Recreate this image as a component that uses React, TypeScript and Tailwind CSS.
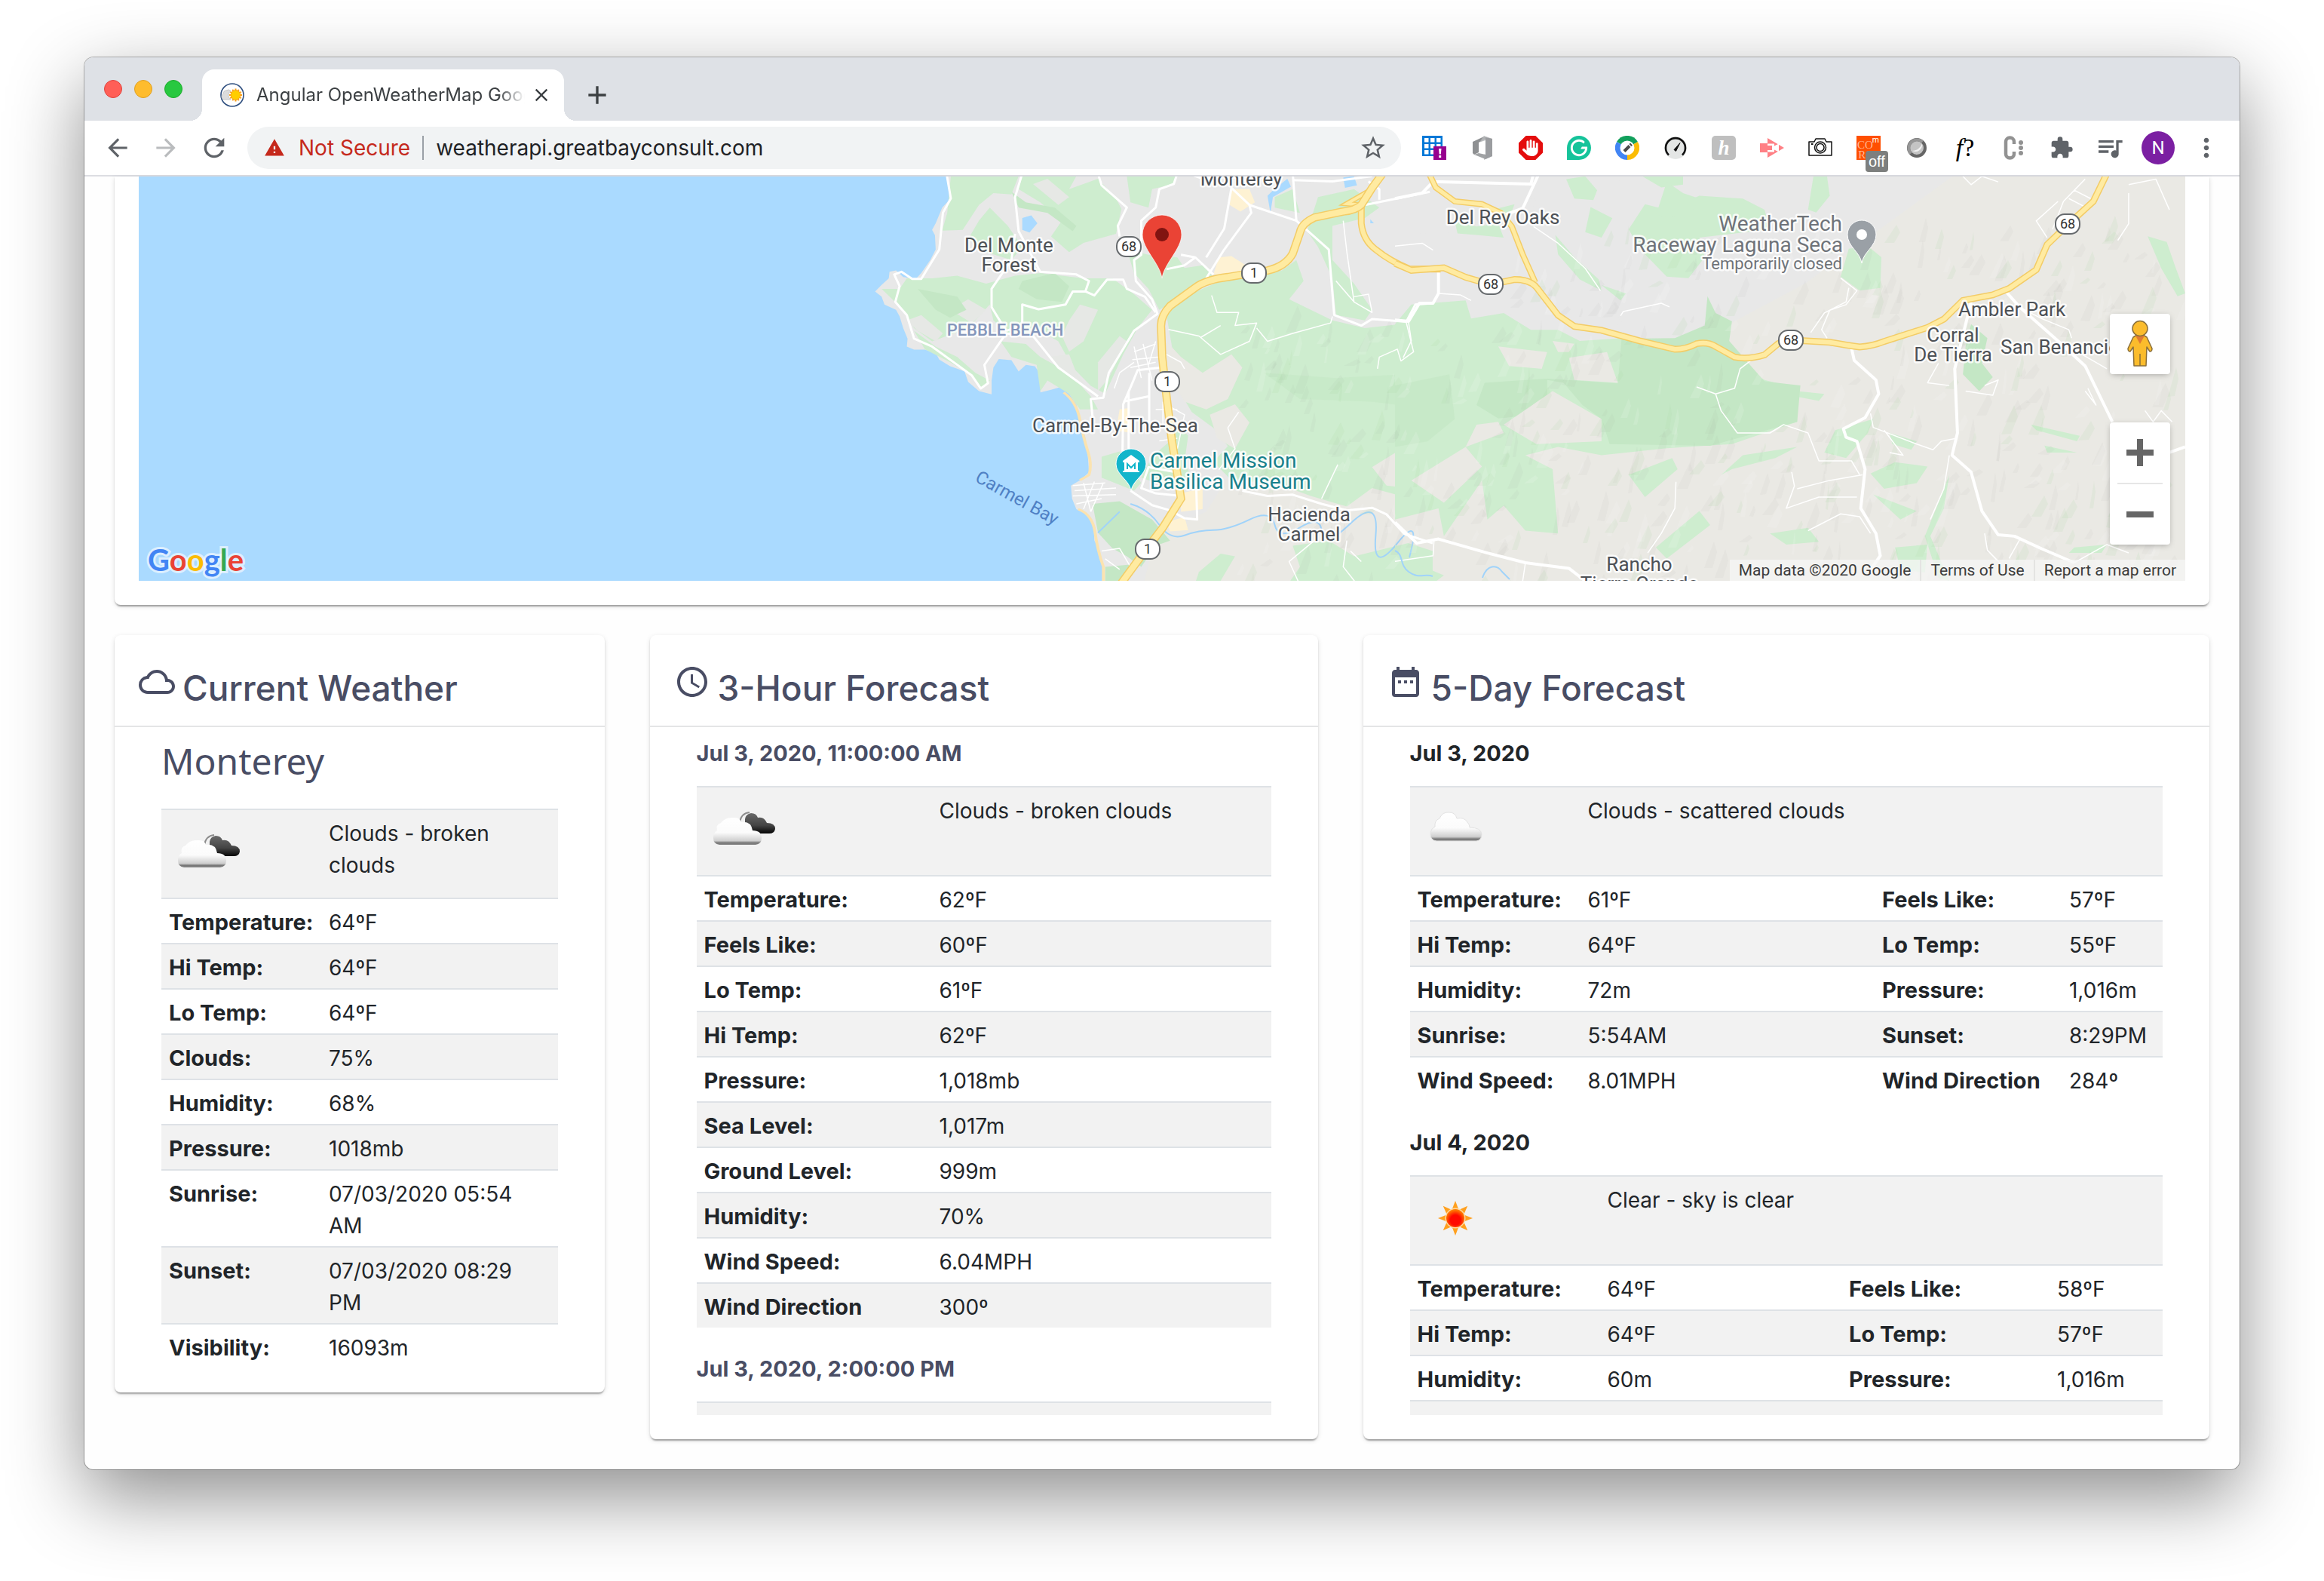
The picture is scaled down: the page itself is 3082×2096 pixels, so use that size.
import React from "react";
import {
  MdAccessTime,
  MdAdd,
  MdArrowBack,
  MdArrowForward,
  MdClose,
  MdCloudQueue,
  MdDateRange,
  MdExtension,
  MdMoreVert,
  MdQueueMusic,
  MdRefresh,
  MdStarBorder,
  MdWarning,
} from "react-icons/md";
import { FaHand } from "react-icons/fa6";
import { SiGrammarly } from "react-icons/si";

/* ------------------------------------------------------------------ */
/* Browser chrome                                                      */
/* ------------------------------------------------------------------ */

function Favicon() {
  return (
    <svg viewBox="0 0 32 32" className="size-8 shrink-0" aria-hidden="true">
      <circle cx="16" cy="16" r="15" fill="#fff" stroke="#2f4f7f" strokeWidth="1.6" />
      <g stroke="#f9a01b" strokeWidth="2">
        {[0, 30, 60, 90, 120, 150].map((a) => (
          <path key={a} d="M12 16H29" transform={`rotate(${a} 20.5 16)`} />
        ))}
      </g>
      <circle cx="20.5" cy="16" r="6.4" fill="#ffce00" stroke="#f9a01b" />
      <path
        d="M5 22a4 4 0 0 1-1-7.500a4 4 0 0 1 4-4.500a4.500 4.500 0 0 1 6 .5a7 7 0 0 0 0 11.500z"
        fill="#dcdcdc"
        stroke="#bdbdbd"
        strokeWidth=".8"
      />
    </svg>
  );
}

function TabStrip() {
  return (
    <div className="flex h-[84px] items-end bg-[#dee1e6] pl-[26px]">
      <div className="flex h-full items-center gap-4">
        <button aria-label="Close window" className="size-6 rounded-full border border-[#e0443e] bg-[#ff5f57]" />
        <button aria-label="Minimize window" className="size-6 rounded-full border border-[#dfa023] bg-[#febc2e]" />
        <button aria-label="Zoom window" className="size-6 rounded-full border border-[#1aab29] bg-[#28c840]" />
      </div>
      <div className="relative ml-[26px] flex h-[68px] w-[480px] items-center rounded-t-2xl bg-white pr-4 pl-6">
        <span className="absolute bottom-0 -left-4 size-4 bg-[radial-gradient(circle_at_0_0,transparent_16px,white_16px)]" />
        <span className="absolute -right-4 bottom-0 size-4 bg-[radial-gradient(circle_at_100%_0,transparent_16px,white_16px)]" />
        <Favicon />
        <span className="ml-4 min-w-0 flex-1 overflow-hidden text-[24px] leading-8 whitespace-nowrap text-[#3c4043] [mask-image:linear-gradient(to_right,black_90%,transparent_100%)]">
          Angular OpenWeatherMap Google
        </span>
        <button aria-label="Close tab" className="ml-2 text-[28px] text-[#3c4043]">
          <MdClose />
        </button>
      </div>
      <button aria-label="New tab" className="mb-3.5 ml-6 text-[40px] text-[#3c4043]">
        <MdAdd />
      </button>
    </div>
  );
}

function GridIcon() {
  return (
    <svg viewBox="0 0 32 32" className="size-8">
      <path fill="#0078d7" d="M0 0h27v27H0z" />
      {[3, 11, 19].map((y) =>
        [3, 11, 19].map((x) => <rect key={`${x}-${y}`} x={x} y={y} width="5.500" height="5.500" fill="#fff" />),
      )}
      <path fill="#97008e" d="M15 14h17v18H15z" />
      <path fill="#fff" d="M22 17h3.500l-.7 7.500h-2.100zM22.200 26h3v3h-3z" />
    </svg>
  );
}

function OfficeIcon() {
  return (
    <svg viewBox="0 0 32 32" className="size-8">
      <path fill="#8e9092" d="M3 8 18 1l4 2-11 6v13l-6 3-2-2z" />
      <path fill="#b6b8ba" d="m18 0 11 4v23l-11 5V8l-7 2 7-10z" opacity=".85" />
      <path fill="#fff" d="M11 9 20 6v19l-9-2z" />
      <path fill="#a1a3a5" d="m5 25 6-2 9 2v6z" />
      <path fill="#9b9da0" d="M20 2l9 2v23l-9 4z" />
    </svg>
  );
}

function AdblockIcon() {
  return (
    <span className="grid size-8 place-items-center bg-[#e40d0d] text-[22px] text-white [clip-path:polygon(30%_0,70%_0,100%_30%,100%_70%,70%_100%,30%_100%,0_70%,0_30%)]">
      <FaHand />
    </span>
  );
}

function ColorWheelIcon() {
  return (
    <svg viewBox="0 0 32 32" className="size-8">
      <path fill="#12a05c" d="M16 16 2.100 8a16 16 0 0 1 27.800 0z" />
      <path fill="#fbbc04" d="M16 16 29.900 8A16 16 0 0 1 16 32z" />
      <path fill="#4285f4" d="M16 16v16A16 16 0 0 1 2.100 8z" />
      <circle cx="16" cy="16" r="9.500" fill="#fff" />
      <path d="m12 20.500 7-7" stroke="#4a4a4a" strokeWidth="4" />
      <path d="m20 12.500 1.500-1.500" stroke="#4a4a4a" strokeWidth="4" />
    </svg>
  );
}

function GaugeIcon() {
  return (
    <svg viewBox="0 0 32 32" className="size-8" fill="none">
      <circle cx="16" cy="16" r="15" fill="#e4e6e5" />
      <path d="M7 25.500a13 13 0 1 1 18 0" stroke="#111" strokeWidth="2.600" />
      <path d="m14 18.500 8-9-5.500 11z" fill="#111" stroke="#111" />
    </svg>
  );
}

function HoneyIcon() {
  return (
    <span className="grid size-8 place-items-center rounded-[5px] bg-[#bfbfbf] font-['Liberation_Serif',serif] text-[27px] leading-8 font-bold text-white italic">
      h
    </span>
  );
}

function ScreencastIcon() {
  return (
    <svg viewBox="0 0 32 32" className="size-8">
      <path fill="#ff8085" d="M10 3 32 16 10 29v-7H0V10h10z" />
      <path fill="#fff" d="M10 10.500h9v3l6-3v11l-6-3v3h-9z" />
      <path fill="#ff8085" d="M10 13h6v6h-6z" />
    </svg>
  );
}

function CameraIcon() {
  return (
    <svg viewBox="0 0 34 32" className="h-8 w-[34px]" fill="none" stroke="#111" strokeWidth="1.500">
      <path d="M2 8h7l2-4h12l2 4h7v18H2z" strokeLinejoin="round" />
      <circle cx="17" cy="15.500" r="7.500" />
      <circle cx="17" cy="15.500" r="5" />
      <path d="M5 11h2.500" strokeWidth="2" />
    </svg>
  );
}

function CorsIcon() {
  return (
    <span className="relative block size-8 bg-[#ff4f00] font-['Liberation_Serif',serif] text-[15px] leading-[13px] text-[#ffb896]">
      <span className="absolute top-1.5 left-px">
        CO
        <br />
        RS
      </span>
      <span className="absolute top-px right-0.5 font-['Liberation_Sans',sans-serif] text-[11px] leading-[8px] text-white">m</span>
      <span className="absolute top-5 left-3 h-7 rounded bg-[#7d7f7e] px-1 font-['Liberation_Sans',sans-serif] text-[20px] leading-7 text-white">
        off
      </span>
    </span>
  );
}

function RingIcon() {
  return (
    <svg viewBox="0 0 32 32" className="size-8" fill="none">
      <circle cx="16" cy="16" r="11" fill="#c4c4c4" stroke="#666" strokeWidth="4" />
      <path d="M8 23.500a11 11 0 0 1 15.500-15.500" stroke="#979797" strokeWidth="4" />
      <path d="M10 20a9 9 0 0 0 13-9.500a14 14 0 0 1-13 9.500z" fill="#f0f0f0" />
    </svg>
  );
}

function DottedCIcon() {
  return (
    <svg viewBox="0 0 32 32" className="size-8" fill="none">
      <path d="M17 11V8a5.500 5.500 0 0 0-11 0v16a5.500 5.500 0 0 0 11 0v-3" stroke="#929292" strokeWidth="4.500" />
      <g fill="#929292">
        <circle cx="26" cy="9" r="3" />
        <circle cx="26" cy="16" r="3" />
        <circle cx="26" cy="23" r="3" />
      </g>
    </svg>
  );
}

const extensions: { label: string; icon: React.ReactNode }[] = [
  { label: "Spreadsheet", icon: <GridIcon /> },
  { label: "Office", icon: <OfficeIcon /> },
  { label: "Ad blocker", icon: <AdblockIcon /> },
  { label: "Grammar", icon: <SiGrammarly className="size-8 text-[#15c39a]" /> },
  { label: "Color picker", icon: <ColorWheelIcon /> },
  { label: "Speed", icon: <GaugeIcon /> },
  { label: "Coupons", icon: <HoneyIcon /> },
  { label: "Screencast", icon: <ScreencastIcon /> },
  { label: "Screenshot", icon: <CameraIcon /> },
  { label: "CORS", icon: <CorsIcon /> },
  { label: "Ring", icon: <RingIcon /> },
  {
    label: "Fonts",
    icon: (
      <span className="font-['Liberation_Serif',serif] text-[34px] leading-8 text-black">
        <i>f</i>
        <b className="font-medium">?</b>
      </span>
    ),
  },
  { label: "Console", icon: <DottedCIcon /> },
  { label: "Extensions", icon: <MdExtension className="size-8 text-[#5f6368]" /> },
  { label: "Media", icon: <MdQueueMusic className="size-10 text-[#5f6368]" /> },
  {
    label: "Profile",
    icon: (
      <span className="grid size-11 place-items-center rounded-full bg-[#7b1fa2] font-['Roboto',sans-serif] text-[24px] leading-none text-white">
        N
      </span>
    ),
  },
  { label: "Menu", icon: <MdMoreVert className="size-10 text-[#5f6368]" /> },
];

function Toolbar() {
  return (
    <div className="flex h-[74px] items-center border-b-2 border-[#dcdde2] bg-white pr-3 pl-3">
      <button aria-label="Back" className="grid w-16 place-items-center text-[38px] text-[#5f6368]">
        <MdArrowBack />
      </button>
      <button aria-label="Forward" className="grid w-16 place-items-center text-[38px] text-[#babcbe]">
        <MdArrowForward />
      </button>
      <button aria-label="Reload" className="grid w-16 place-items-center text-[40px] text-[#5f6368]">
        <MdRefresh />
      </button>
      <div className="ml-3 flex h-14 min-w-0 flex-1 items-center rounded-full bg-[#f1f3f4] pr-[18px] pl-[22px] text-[28px] leading-9">
        <MdWarning className="size-7 shrink-0 text-[#c5291c]" />
        <span className="ml-[18px] whitespace-nowrap text-[#c5291c]">Not Secure</span>
        <span className="mr-4 ml-4 h-8 w-0.5 bg-[#9aa0a6]" />
        <input
          aria-label="Address"
          className="min-w-0 flex-1 bg-transparent text-[#202124] outline-none"
          defaultValue="weatherapi.greatbayconsult.com"
        />
        <button aria-label="Bookmark" className="text-[38px] text-[#5f6368]">
          <MdStarBorder />
        </button>
      </div>
      <div className="ml-3 flex items-center">
        {extensions.map((e) => (
          <button key={e.label} aria-label={e.label} className="grid h-14 w-16 place-items-center">
            {e.icon}
          </button>
        ))}
      </div>
    </div>
  );
}

/* ------------------------------------------------------------------ */
/* Map                                                                 */
/* ------------------------------------------------------------------ */

const COAST =
  "M222 0 232 95 208 130 190 190 180 215 188 235 190 290 175 330 150 380 135 402 100 395 80 370 62 375 60 400 40 425 22 450 40 470 48 500 80 520 90 545 100 590 112 630 110 660 130 672 160 672 190 685 200 710 230 735 270 755 280 795 310 830 345 842 345 790 350 740 365 708 400 712 420 755 440 730 465 735 485 775 480 835 510 825 535 815 560 840 580 880 595 950 605 1010 612 1080 615 1140 590 1170 565 1190 568 1240 580 1280 610 1300 628 1340 630 1400 645 1440 655 1500 655 1600H3800V0Z";

/* Small hill-shading facets scattered over the inland part of the map. */
function facets(count: number) {
  let seed = 7;
  const rnd = () => {
    seed = (seed * 16807) % 2147483647;
    return seed / 2147483647;
  };
  const out: { d: string; fill: string; opacity: number }[] = [];
  for (let i = 0; i < count; i++) {
    const x = 1640 + rnd() * 1250;
    const low = x < 2000 ? 440 : 320;
    const y = low + rnd() * (790 - low);
    const w = 4 + rnd() * 14;
    const h = 8 + rnd() * 32;
    const t = rnd();
    out.push({
      d: `M${x.toFixed(0)} ${y.toFixed(0)}l${w.toFixed(0)} ${(-h).toFixed(0)} ${(w * 0.3).toFixed(0)} ${(h * 0.4).toFixed(0)} ${(-w * 0.5).toFixed(0)} ${(h * 0.6).toFixed(0)}z`,
      fill: t < 0.5 ? "#8a8a80" : t < 0.8 ? "#ffffff" : "#a8d8a0",
      opacity: t < 0.5 ? 0.05 : t < 0.8 ? 0.13 : 0.12,
    });
  }
  return out;
}

const hill = facets(620);

const shields: [number, number, string][] = [
  [1497, 327, "68"],
  [1663, 362, "1"],
  [1548, 506, "1"],
  [1522, 728, "1"],
  [1977, 377, "68"],
  [2375, 451, "68"],
  [2742, 297, "68"],
];

type Label = { x: number; y: number; text: string; anchor?: "start" | "middle" | "end"; fill?: string; size?: number };

const labels: Label[] = [
  { x: 1646, y: 246, text: "Monterey" },
  { x: 1338, y: 334, text: "Del Monte" },
  { x: 1338, y: 360, text: "Forest" },
  { x: 1479, y: 573, text: "Carmel-By-The-Sea" },
  { x: 1525, y: 620, text: "Carmel Mission", anchor: "start", fill: "#17808c", size: 28 },
  { x: 1525, y: 648, text: "Basilica Museum", anchor: "start", fill: "#17808c", size: 28 },
  { x: 1736, y: 691, text: "Hacienda" },
  { x: 1736, y: 717, text: "Carmel" },
  { x: 1993, y: 297, text: "Del Rey Oaks" },
  { x: 2443, y: 306, text: "WeatherTech", anchor: "end", fill: "#6f7379", size: 28 },
  { x: 2444, y: 334, text: "Raceway Laguna Seca", anchor: "end", fill: "#6f7379", size: 28 },
  { x: 2443, y: 357, text: "Temporarily closed", anchor: "end", fill: "#6f7379", size: 22 },
  { x: 2668, y: 419, text: "Ambler Park" },
  { x: 2590, y: 453, text: "Corral" },
  { x: 2590, y: 479, text: "De Tierra" },
  { x: 2653, y: 469, text: "San Benancio", anchor: "start" },
  { x: 2174, y: 757, text: "Rancho" },
  { x: 2174, y: 783, text: "Tierra Grande" },
];

const HWY1 =
  "M1440-20 1400 55 1370 120Q1355 140 1320 145L1240 168Q1205 190 1200 225L1180 305Q1160 355 1110 370L1000 395Q940 405 910 435L840 505Q812 545 815 590L818 700 830 850 845 1020 858 1130 870 1240 820 1350 770 1440 690 1590";
const HWY68_SPUR = "M1370 120V190Q1375 255 1410 290Q1450 335 1505 365L1590 365";
const HWY68_EAST =
  "M0 322 30 347 90 338 130 372 176 398 220 380Q250 380 262 412L300 508 330 548 380 562 450 600 515 630Q535 630 555 610Q575 602 590 620L625 658Q650 668 680 650L705 610Q715 596 740 598L800 605Q830 615 855 622Q880 618 900 602L980 552 1010 522 1045 455 1100 435 1130 412 1180 345 1200 255 1240 180 1285 100 1315-20";
const HWY218 = "M60-10 75 50 110 100 160 110 195 142 215 190 235 290 258 390";

function Highway({ d, w = 8 }: { d: string; w?: number }) {
  return (
    <g fill="none">
      <path d={d} stroke="#f3cc66" strokeWidth={w + 3} vectorEffect="non-scaling-stroke" />
      <path d={d} stroke="#ffeba1" strokeWidth={w} vectorEffect="non-scaling-stroke" />
    </g>
  );
}

function WestLand() {
  return (
    <g transform="translate(1150 230) scale(.4783 .3476)">
      <path d={COAST} fill="#e8e8e8" />
      <path d="M1240 1100 1568 1220H3800V0H3020L2600 420 1568 1180 1000 1160 940 1290 800 1380 760 1600H3800V1100Z" fill="#eae9e4" />
      <g fill="#ceedcf">
        <path d="M232 10H420L400 80 350 75 310 120 265 215 208 218 222 150Z" />
        <path d="M430 10H580L560 60 640 20 690 95 705 135 690 230 600 265 560 300 510 240 540 180 480 110 420 60Z" />
        <path d="M310 180 340 130 390 200 430 280 400 330 330 300 280 250Z" />
        <path d="M720 10H860L850 40 790 60 780 130 730 110Z" />
        <path d="M40 440 90 440 110 400 180 400 250 390 330 420 410 390 480 380 600 400 680 400 740 460 790 520 750 590 710 690 660 840 620 810 570 740 530 640 480 600 400 620 350 560 340 500 280 590 180 640 130 590 100 520Z" />
        <path d="M130 600 190 660 250 700 300 760 340 790 320 820 280 760 230 720 160 670Z" />
        <path d="M370 640 440 650 480 700 560 760 620 850 640 900 590 900 560 840 500 790 480 830 470 730 400 700Z" />
        <path d="M720 290 780 310 860 320 880 360 930 350 960 395 880 460 810 520 780 440 740 380Z" />
        <path d="M980 410 1150 370 1190 330 1210 410 1170 480 1290 560 1380 590 1568 560V1240L1480 1230 1400 1200 1330 1270 1230 1230 1130 1180 1010 1170 960 1100 1000 1040 960 970 900 910 870 840 850 700 840 620 830 540 880 470Z" />
        <path d="M1250 90 1350 60 1420 130 1380 170 1290 200 1290 330 1350 420 1400 520 1380 560 1300 540 1290 400 1250 280 1220 220Z" />
        <path d="M860 960 890 1000 880 1100 900 1160 860 1200 800 1180 760 1160 790 1080 840 1020Z" />
        <path d="M650 1080 700 1060 760 1180 740 1210 650 1160Z" />
        <path d="M1130 90 1180 60 1200 150 1130 130Z" />
        <path d="M1180 1420 1280 1400 1350 1460 1500 1410 1568 1440V1600H1150L1200 1500Z" />
        <path d="M920 1520 980 1450 1020 1460 960 1600H900Z" />
      </g>
      <g fill="#e6e8e5">
        <path d="M560 560 590 500 640 520 600 640 560 680 540 620Z" />
        <path d="M110 560 150 540 210 610 190 640 140 600Z" />
        <path d="M640 720 700 620 720 640 670 780 640 830Z" />
        <path d="M230 520 280 480 330 520 290 570Z" />
        <path d="M500 700 560 690 580 760 600 800 550 760Z" />
        <path d="M460 40 500 20 560 90 530 120Z" />
      </g>
      <g fill="#eae9e4">
        <path d="M830 640 870 700 930 760 1010 690 1040 740 1000 860 940 900 880 870 830 760Z" />
        <path d="M950 920 1020 880 1060 950 1020 1050 970 1010Z" />
        <path d="M1400 1120 1470 1060 1568 1010V1150L1500 1200 1440 1190Z" />
      </g>
      <g fill="#c4e7c5">
        <path d="M140 440 250 470 275 520 230 550 190 520Z" />
        <path d="M430 410 520 380 560 430 540 490 470 480 420 440Z" />
        <path d="M400 70 440 110 520 130 580 200 570 220 500 150 420 130Z" />
        <path d="M625 1260 700 1250 790 1320 840 1400 800 1420 760 1500 720 1460 680 1430 640 1370Z" />
        <path d="M660 1500 740 1490 700 1570H660Z" />
        <path d="M1100 760 1300 780 1568 760V900L1400 870 1200 860Z" opacity=".6" />
      </g>
      <g fill="#fef2d3">
        <path d="M1010 60 1060 60 1075 110 1035 145 1005 120Z" />
        <path d="M975 320 1010 315 1050 350 1050 385 960 385Z" />
        <path d="M870 1220 930 1200 930 1280 870 1290ZM830 1330 880 1310 890 1360 840 1365Z" />
        <path d="M700 900 725 895 735 990 690 980Z" />
      </g>
      <path
        d="M545 835Q580 870 590 940T612 1060 615 1150L590 1170M585 1280Q625 1300 632 1370T655 1500V1580"
        fill="none"
        stroke="#fbe3b0"
        strokeWidth="8"
      />
      <g fill="#aadaff">
        <path d="M430 170 455 160 472 190 450 225 430 215Z" />
        <path d="M1320 15 1350 10 1358 45 1325 55Z" />
        <path d="M1110 85 1125 65 1165 20 1175 50 1125 90 1118 150Z" />
        <path d="M1395 175 1405 190 1395 190Z" />
      </g>
      <path
        d="M730 1260Q780 1280 810 1340T880 1380 960 1360 1060 1320 1130 1340 1200 1350 1260 1370 1340 1335 1410 1380 1470 1410 1500 1480 1568 1550M640 1370 700 1290"
        fill="none"
        stroke="#a0d3fa"
        strokeWidth="2"
        vectorEffect="non-scaling-stroke"
      />
    </g>
  );
}

function EastLand() {
  return (
    <g transform="translate(1850 230) scale(.7207 .3699)">
      <path d="M0 0H340L290 80 250 100 280 220 390 460 420 540 330 550 260 400 230 450 200 550 130 500 60 460 0 500Z" fill="#e8e8e8" />
      <path d="M0 0H420L400 70 250 90 220 200 0 220Z" fill="#e8e8e8" />
      <g fill="#ceedcf">
        <path d="M0 540 30 470 130 455 140 520 200 500 250 560 300 560 340 600 420 590 520 640 600 650 680 740 740 770 740 890 620 970 500 985 380 1010 300 980 240 1010 290 1060 300 1290 240 1280 200 1190 170 1240 160 1100 90 1300 80 1200 0 1240Z" />
        <path d="M315 20 350 10 372 60 365 95 330 90Z" />
        <path d="M360 120 400 160 380 230 350 210Z" />
        <path d="M460 110 500 130 560 80 640 90 680 130 690 200 560 230 570 300 540 375 500 370 450 270 430 200Z" />
        <path d="M295 220 330 300 375 380 380 420 340 380 300 290Z" />
        <path d="M380 400 425 430 415 455Z" />
        <path d="M455 10H530V40L490 50Z" />
        <path d="M770 10 795 10 800 80 775 140 760 130Z" />
        <path d="M835 270 870 260 895 300 893 410 855 420 820 370Z" />
        <path d="M500 30 530 70 560 90 540 160 480 150Z" />
        <path d="M1170 900 1260 940 1255 960 1180 920ZM1195 975 1255 1000 1200 1000Z" />
        <path d="M1385 225 1420 245 1435 330 1454 430 1440 440 1410 340Z" />
        <path d="M790 1000 810 920 880 880 870 930 830 1020Z" />
        <path d="M875 1075 920 1035 980 1050 960 1110 900 1130Z" />
        <path d="M880 1150 960 1210 930 1240Z" />
        <path d="M1020 1080 1010 1200 985 1300 1020 1460 1000 1450 975 1300 1000 1180Z" />
        <path d="M600 1080 640 1010 740 980 700 1020 620 1060Z" />
        <path d="M430 1080 510 1020 520 1060 460 1160Z" />
        <path d="M690 1290 760 1270 780 1320 720 1330ZM920 1340 980 1330 975 1430 930 1420Z" />
        <path d="M560 1210 580 1260 500 1380 480 1340Z" />
        <path d="M1250 1340 1310 1330 1300 1360 1240 1360ZM910 930 960 960 950 990 915 970Z" />
        <path d="M740 780 790 790 780 815 740 800ZM0 1330 40 1400 90 1440 70 1470H0Z" />
        <path d="M110 170 150 190 190 180 200 230 150 220 115 215ZM180 130 220 110 210 160Z" />
      </g>
      <g fill="#c4e7c5">
        <path d="M417 592 515 590 570 545 575 440 590 500 620 530 615 600 655 690 680 745 746 760 740 890 580 976 395 970 380 880 345 830 310 750 280 740 280 860 190 878 150 830 165 750 280 735 410 752Z" />
        <path d="M0 760 100 720 110 880 60 960 0 980Z" opacity=".7" />
        <path d="M1060 540 1090 590 1080 680 1100 730 1075 780 1045 720 1050 620Z" />
      </g>
      <g fill="#eae9e4">
        <path d="M190 620 280 640 270 700 210 690Z" />
        <path d="M320 660 390 640 410 750 330 740Z" />
        <path d="M290 600 330 610 320 640 300 640Z" />
        <path d="M200 900 290 780 380 880 380 960 260 970Z" />
        <path d="M30 1100 130 980 160 1050 90 1180Z" />
        <path d="M150 900 190 890 200 930 130 980Z" />
      </g>
    </g>
  );
}

function WhiteRoads() {
  return (
    <g fill="none" stroke="#fff" strokeLinejoin="round">
      <g transform="translate(1150 230) scale(.4783 .3476)" strokeWidth="3">
        {[
          "M220 0 232 95 210 150 200 290 150 402 125 402 95 375 75 385 90 430 78 490 110 540 130 630 180 660 290 770 315 820 335 800 325 730 385 610 460 620 530 740 640 850",
          "M430 0 410 90 420 220 480 375 580 385 615 410 605 450 630 465 665 405 710 405 720 440 770 470 800 530",
          "M410 230 400 330 345 440 345 510 385 600",
          "M385 600 430 580 430 500 475 518 550 500 570 450 605 450",
          "M640 0 650 45 720 130 695 200 700 240",
          "M860 0 850 40 810 60 800 130 760 180 760 310 740 330 745 410 790 480 805 535 740 600 670 760 655 855 620 860 625 930",
          "M1060 120 1010 55 990 210 940 320",
          "M1180 0 1190 180 1060 120 1065 150 990 290 940 400",
          "M1190 180 1280 290 1295 540 1370 580 1400 555 1495 565 1520 500 1568 495",
          "M1380 120 1560 70M890 0 930 20M1000 10 1060 30M1180 25 1290 30 1400 10M1390 30 1420 60 1420 100",
          "M830 365 880 350 910 320 960 385M870 310 910 320",
          "M815 740 750 750 735 800 710 880 708 1060M782 760V960M725 830V1060M710 870 780 850",
          "M730 1210 790 1265 840 1285 880 1315 915 1320 912 1170",
          "M860 1140 780 1120 760 1200 800 1220 870 1230",
          "M1040 1210 1110 1230 1180 1225 1260 1260 1330 1285 1400 1275 1440 1300 1490 1375 1568 1410",
        ].map((d) => (
          <path key={d} d={d} vectorEffect="non-scaling-stroke" />
        ))}
      </g>
      <g transform="translate(1150 230) scale(.4783 .3476)" strokeWidth="1.500">
        {[
          "M835 595 920 620 980 690 1060 640 1080 570 1020 580 1030 530 970 530 955 465M925 625 980 580M1080 590 1110 640 1180 610 1285 570 1290 545",
          "M1495 570 1515 680 1480 715 1470 670 1420 700 1415 745",
          "M1030 910 1000 970 1020 1050 975 1130M1305 1110 1260 1240M1240 1400 1170 1480 1210 1600M1330 1400 1320 1500 1360 1570",
          "M740 680 800 650M735 710 810 700M730 740 800 720M740 660 760 780M765 650 790 790M800 640 780 730M685 820 700 760 740 720M830 690 870 720 880 745",
          "M570 1190 660 1180M575 1210 690 1200M570 1230 690 1225M580 1260 650 1240M600 1180 620 1290M630 1175 600 1280M655 1180 620 1290",
          "M650 1440 700 1430 730 1500M660 1470 700 1510M820 870 820 960M840 890 880 920 860 1050M800 900H860M790 960H870M810 1020 860 1010",
          "M1320 180 1330 300 1350 490 1400 530 1390 460 1350 470M1300 410 1350 490M1370 1480 1340 1440",
        ].map((d) => (
          <path key={d} d={d} vectorEffect="non-scaling-stroke" />
        ))}
      </g>
      <g transform="translate(1850 230) scale(.7207 .3699)" strokeWidth="4">
        {[
          "M0 90 50 70 70 30 80 30 250 38 255 0M265 0 235 125 200 150",
          "M80 340 80 430 70 465 45 465 25 530 0 525",
          "M0 1250 40 1325 80 1310 170 1360 240 1395 320 1415 350 1460",
          "M840 625 845 670 885 740 890 790 865 875 825 915 830 945 850 960 865 1060 857 1200 885 1290 893 1370 875 1420",
          "M1060 460 1030 700 1035 930 1025 1010 1060 1070 1080 1210 1110 1295 1140 1300 1190 1345 1250 1395",
          "M1125 425 1150 480 1220 600 1270 690 1320 890",
          "M1425 1000 1454 980",
        ].map((d) => (
          <path key={d} d={d} vectorEffect="non-scaling-stroke" />
        ))}
      </g>
      <g transform="translate(1850 230) scale(.7207 .3699)" strokeWidth="1.500">
        {[
          "M255 190 300 250 350 340 378 420M415 510 420 495 490 465 505 478M80 430 120 435 140 455M25 535 30 600 15 660",
          "M655 670 635 700 625 770 590 790 555 765M590 790 600 850 630 930 690 930 715 900 760 930 780 1030 840 1030 855 1080",
          "M820 375 850 420 830 470 800 490 785 560 795 590M835 410 830 460 790 500 765 570",
          "M1030 950 1005 960 990 990 960 970 880 910 875 860M900 920 935 1010 910 1000",
          "M1210 200 1230 100 1270 20M1200 230 1180 170 1220 100M1240 90 1270 120M1250 60 1280 90M1330 240 1350 180 1350 70M1350 40 1400 20 1425 130",
          "M1150 480 1190 520 1240 560 1245 590M1230 610 1310 700M1270 780 1290 830 1275 770",
          "M1000 680 980 750 1020 760M1050 780 1100 795 1110 740 1085 760M1045 10 1060 40 1080 10 1110 30",
          "M730 1070 735 1120 720 1200 780 1160 850 1160M740 1130 800 1100 860 1080M760 1280 820 1220 855 1230 875 1290M517 1105 515 1200 490 1290 465 1360",
          "M1020 1010 1010 1130 985 1240M1085 1290 1090 1350 1115 1400M1150 1310 1130 1380M1380 850 1395 890 1410 850 1430 890",
          "M0 1390 70 1370 72 1310M240 1395 235 1460M1250 1395 1310 1330 1350 1360M0 260 50 250 70 275",
        ].map((d) => (
          <path key={d} d={d} vectorEffect="non-scaling-stroke" />
        ))}
      </g>
      <path
        d="M1850 730C1862 735 1855 748 1868 758S1890 760 1900 764M1966 766C1972 748 1985 748 1992 758L2002 768"
        stroke="#a0d3fa"
        strokeWidth="2"
      />
    </g>
  );
}

function GoogleLogo() {
  const letters: [string, string][] = [
    ["G", "#4285f4"],
    ["o", "#ea4335"],
    ["o", "#fbbc04"],
    ["g", "#4285f4"],
    ["l", "#34a853"],
    ["e", "#ea4335"],
  ];
  return (
    <a
      href="#google"
      aria-label="Google"
      className="absolute bottom-1 left-3 font-['Lato',sans-serif] text-[40px] leading-[48px] font-bold [paint-order:stroke] [-webkit-text-stroke:6px_rgba(255,255,255,.6)]"
    >
      {letters.map(([ch, fill], i) => (
        <span key={i} style={{ color: fill }}>
          {ch}
        </span>
      ))}
    </a>
  );
}

function Pegman() {
  return (
    <svg viewBox="0 0 40 64" className="h-16 w-10" aria-hidden="true">
      <path
        d="M11 23Q5 36 4 38Q4 42 7 42L11 36 12 61H28L29 36 33 42Q36 42 36 38Q35 36 29 23L24 20H16Z"
        fill="#fbbc2c"
        stroke="#8a6f3a"
        strokeWidth="1.500"
        strokeLinejoin="round"
      />
      <path d="M14 21H26L20 32Z" fill="#e07b33" />
      <path d="M20 45V61" stroke="#8a6f3a" strokeWidth="1.500" />
      <circle cx="20" cy="11.500" r="10" fill="#fbbc2c" stroke="#8a6f3a" strokeWidth="1.500" />
    </svg>
  );
}

function MapPanel() {
  return (
    <div className="relative h-[536px] overflow-hidden bg-[#aadaff] font-['Roboto',sans-serif]">
      <svg viewBox="184 234 2714 536" preserveAspectRatio="xMidYMid slice" className="size-full" role="img" aria-label="Map of Monterey">
        <defs>
          <clipPath id="coast">
            <path d={COAST} transform="translate(1150 230) scale(.4783 .3476)" />
          </clipPath>
        </defs>
        <WestLand />
        <EastLand />
        <g clipPath="url(#coast)">
          {hill.map((f, i) => (
            <path key={i} d={f.d} fill={f.fill} opacity={f.opacity} />
          ))}
        </g>
        <WhiteRoads />
        <g transform="translate(1150 230) scale(.4783 .3476)">
          <Highway d={HWY68_SPUR} w={6} />
          <Highway d="M1370 120 1330 115 1400 60" w={4} />
          <Highway d={HWY1} />
        </g>
        <g transform="translate(1850 230) scale(.7207 .3699)">
          <Highway d={HWY218} w={5} />
          <Highway d={HWY68_EAST} w={6} />
        </g>

        <g fontSize="18" textAnchor="middle" fill="#333">
          {shields.map(([x, y, n]) => (
            <g key={`${x}-${y}`}>
              <rect x={x - 16} y={y - 13} width="32" height="26" rx="12" fill="#fff" stroke="#666a6d" strokeWidth="2" />
              <text x={x} y={y + 6}>
                {n}
              </text>
            </g>
          ))}
        </g>

        <g stroke="#fff" strokeWidth="5" strokeLinejoin="round" paintOrder="stroke">
          {labels.map((l) => (
            <text
              key={l.text + l.y}
              x={l.x}
              y={l.y}
              textAnchor={l.anchor ?? "middle"}
              fill={l.fill ?? "#4d5156"}
              fontSize={l.size ?? 26}
              strokeOpacity=".85"
            >
              {l.text}
            </text>
          ))}
          <text x="1333" y="445" textAnchor="middle" fill="#8496bb" fontSize="22" fontWeight="500" strokeOpacity=".85">
            PEBBLE BEACH
          </text>
        </g>
        <text transform="translate(1345 667) rotate(29)" textAnchor="middle" fill="#4f80c4" fontSize="24">
          Carmel Bay
        </text>

        <path
          d="M1541 369C1538 349 1515 330 1515 311A26 26 0 0 1 1567 311C1567 330 1544 349 1541 369Z"
          fill="#ea4335"
          stroke="#fff"
          strokeOpacity=".7"
        />
        <circle cx="1541" cy="311" r="9" fill="#811411" />
        <path d="M1500 651C1498 636 1480 630 1480 615A20 20 0 0 1 1520 615C1520 630 1502 636 1500 651Z" fill="#12b5cb" stroke="#fff" />
        <path d="M1489 611 1500 603 1511 611V613H1489ZM1489 624H1511V626H1489Z" fill="#fff" />
        <path d="M1491 612H1509V625H1491Z" fill="#fff" />
        <path d="M1495 622V615L1500 620 1505 615V622" fill="none" stroke="#12b5cb" strokeWidth="2" />
        <path d="M2469 349C2467 334 2450 327 2450 311A19 19 0 0 1 2488 311C2488 327 2471 334 2469 349Z" fill="#9aa0a6" stroke="#fff" />
        <circle cx="2469" cy="311" r="7" fill="#fff" />
      </svg>

      <GoogleLogo />

      <div className="absolute right-5 bottom-12 flex w-20 flex-col gap-16">
        <button aria-label="Street View" className="grid size-20 place-items-center rounded bg-white shadow-[0_2px_8px_-2px_rgba(0,0,0,.35)]">
          <Pegman />
        </button>
        <div className="flex flex-col items-center rounded bg-white shadow-[0_2px_8px_-2px_rgba(0,0,0,.35)]">
          <button aria-label="Zoom in" className="grid size-20 place-items-center">
            <svg viewBox="0 0 36 36" className="size-9">
              <path d="M0 14H14V0H22V14H36V22H22V36H14V22H0Z" fill="#666" />
            </svg>
          </button>
          <span className="h-0.5 w-[60px] bg-[#e6e6e6]" />
          <button aria-label="Zoom out" className="grid size-20 place-items-center">
            <svg viewBox="0 0 36 36" className="size-9">
              <path d="M0 14H36V22H0Z" fill="#666" />
            </svg>
          </button>
        </div>
      </div>

      <div className="absolute right-0 bottom-0 flex h-7 divide-x-2 divide-[#e4e4e2] bg-[#f5f5f5]/75 text-[21px] leading-7 text-[#3c3c3c]">
        <span className="px-3">Map data ©2020 Google</span>
        <a href="#terms" className="px-3">
          Terms of Use
        </a>
        <a href="#report" className="px-3">
          Report a map error
        </a>
      </div>
    </div>
  );
}

/* ------------------------------------------------------------------ */
/* Weather icons                                                       */
/* ------------------------------------------------------------------ */

function CloudGradients() {
  return (
    <svg className="absolute size-0" aria-hidden="true">
      <defs>
        <linearGradient id="cloudLight" x1="0" y1="0" x2="0" y2="1">
          <stop offset="0" stopColor="#ffffff" />
          <stop offset=".55" stopColor="#fbfbfb" />
          <stop offset=".85" stopColor="#cfcfcf" />
          <stop offset=".93" stopColor="#777" />
          <stop offset="1" stopColor="#8a8a8a" />
        </linearGradient>
        <linearGradient id="cloudDark" x1="0" y1="0" x2="0" y2="1">
          <stop offset="0" stopColor="#6a6a6a" />
          <stop offset=".6" stopColor="#444" />
          <stop offset="1" stopColor="#050505" />
        </linearGradient>
        <radialGradient id="sunCore" cx=".5" cy=".6" r=".55">
          <stop offset=".5" stopColor="#ff0800" />
          <stop offset="1" stopColor="#ff7a00" />
        </radialGradient>
      </defs>
    </svg>
  );
}

function BrokenClouds() {
  return (
    <svg viewBox="0 0 100 100" className="size-[100px]" role="img" aria-label="Broken clouds">
      <path d="M49 38Q51 26 62 25" fill="none" stroke="#8c8c8c" strokeWidth="2" />
      <path d="M56 34Q57 27 64 26Q71 26 73 32Q81 30 85 39Q96 39 96 47Q95 53 88 53H70Q62 50 56 40Z" fill="url(#cloudDark)" />
      <path
        d="M22 68Q14 67 14 59Q14 52 19 49Q17 41 24 39Q30 31 41 32Q49 31 51 38Q64 36 66 49Q78 49 78 59Q78 67 70 68Z"
        fill="url(#cloudLight)"
      />
    </svg>
  );
}

function ScatteredClouds() {
  return (
    <svg viewBox="0 0 100 100" className="size-[100px]" role="img" aria-label="Scattered clouds">
      <path
        d="M27 63Q19 62 19 54Q19 47 25 44Q24 36 31 33Q35 24 44 25Q52 25 54 33Q64 31 68 38Q71 41 71 45Q86 45 87 54Q87 62 80 63Z"
        fill="url(#cloudLight)"
        stroke="#e2e2e2"
      />
    </svg>
  );
}

function ClearSun() {
  return (
    <svg viewBox="0 0 100 100" className="size-[100px]" role="img" aria-label="Clear sky">
      {[0, 45, 90, 135, 180, 225, 270, 315].map((a) => (
        <path key={a} d="M47 37 52 24 57 37Z" fill="#ffa01f" transform={`rotate(${a} 52 47)`} />
      ))}
      <circle cx="52" cy="47" r="13.500" fill="#ffd9a0" />
      <circle cx="52" cy="47" r="12" fill="url(#sunCore)" />
    </svg>
  );
}

/* ------------------------------------------------------------------ */
/* Weather cards                                                       */
/* ------------------------------------------------------------------ */

const CARD =
  "rounded-lg bg-white shadow-[0_4px_2px_-2px_rgba(0,0,0,.2),0_2px_2px_rgba(0,0,0,.14),0_2px_6px_rgba(0,0,0,.12)]";

function Card({ title, icon, span, children }: { title: string; icon: React.ReactNode; span: string; children: React.ReactNode }) {
  return (
    <section className={`${CARD} ${span} pb-8`}>
      <header className="flex h-[122px] items-center gap-2.5 border-b-2 border-[#e4e5e6] px-8 pt-5 text-[#494d64]">
        <span className="mb-4 text-[48px]">{icon}</span>
        <h2 className="text-[46px] leading-[58px] font-medium">{title}</h2>
      </header>
      {children}
    </section>
  );
}

type Row = React.ReactNode[];

function WeatherTable({ cols, icon, summary, rows, label }: { cols: string[]; icon: React.ReactNode; summary?: string; rows: Row[]; label: string }) {
  const cell = "border-t-2 border-[#dee2e6] text-left align-top";
  return (
    <table aria-label={label} className="w-full table-fixed border-separate border-spacing-0 text-[28px] leading-[42px] text-[#212529]">
      <colgroup>
        {cols.map((c, i) => (
          <col key={i} className={c} />
        ))}
      </colgroup>
      <tbody>
        <tr className="bg-[#f2f2f2]">
          <td className={`${cell} p-2`}>{icon}</td>
          <td className={`${cell} px-2.5 pt-2.5 pb-1.5`} colSpan={cols.length - 1}>
            {summary}
          </td>
        </tr>
        {rows.map((row, r) => (
          <tr key={r} className={r % 2 ? "bg-[#f2f2f2]" : ""}>
            {row.map((value, c) =>
              c % 2 === 0 ? (
                <th key={c} scope="row" className={`${cell} px-2.5 pt-2.5 pb-1.5 text-[29px] font-bold whitespace-nowrap`}>
                  {value}
                </th>
              ) : (
                <td key={c} className={`${cell} px-2.5 pt-2.5 pb-1.5`}>
                  {value}
                </td>
              ),
            )}
          </tr>
        ))}
      </tbody>
    </table>
  );
}

const currentRows: Row[] = [
  ["Temperature:", "64ºF"],
  ["Hi Temp:", "64ºF"],
  ["Lo Temp:", "64ºF"],
  ["Clouds:", "75%"],
  ["Humidity:", "68%"],
  ["Pressure:", "1018mb"],
  ["Sunrise:", "07/03/2020 05:54 AM"],
  ["Sunset:", "07/03/2020 08:29 PM"],
  ["Visibility:", "16093m"],
].map(([name, value]) => [
  name,
  <span key={name} className="block max-w-[280px]">
    {value}
  </span>,
]);

const hourlyRows: Row[] = [
  ["Temperature:", "62ºF"],
  ["Feels Like:", "60ºF"],
  ["Lo Temp:", "61ºF"],
  ["Hi Temp:", "62ºF"],
  ["Pressure:", "1,018mb"],
  ["Sea Level:", "1,017m"],
  ["Ground Level:", "999m"],
  ["Humidity:", "70%"],
  ["Wind Speed:", "6.04MPH"],
  ["Wind Direction", "300º"],
];

const day1Rows: Row[] = [
  ["Temperature:", "61ºF", "Feels Like:", "57ºF"],
  ["Hi Temp:", "64ºF", "Lo Temp:", "55ºF"],
  ["Humidity:", "72m", "Pressure:", "1,016m"],
  ["Sunrise:", "5:54AM", "Sunset:", "8:29PM"],
  ["Wind Speed:", "8.01MPH", "Wind Direction", "284º"],
];

const day2Rows: Row[] = [
  ["Temperature:", "64ºF", "Feels Like:", "58ºF"],
  ["Hi Temp:", "64ºF", "Lo Temp:", "57ºF"],
  ["Humidity:", "60m", "Pressure:", "1,016m"],
  ["\u00a0", "", "", ""],
];

function DateHeading({ children, className }: { children: React.ReactNode; className: string }) {
  return <h3 className={`mb-[22px] text-[29px] leading-[42px] font-bold ${className}`}>{children}</h3>;
}

export default function App() {
  return (
    <div className="bg-white px-28 pt-[76px] pb-[148px] font-['Inter',sans-serif]">
      <CloudGradients />
      <div className="overflow-hidden rounded-[12px] bg-[#fefefe] shadow-[0_0_0_1px_rgba(0,0,0,.28),0_36px_100px_rgba(0,0,0,.45)]">
        <TabStrip />
        <Toolbar />
        <main className="px-10 pb-10">
          <section className="rounded-b-lg bg-white px-8 pb-8 shadow-[0_4px_2px_-2px_rgba(0,0,0,.2),0_2px_2px_rgba(0,0,0,.14),0_2px_6px_rgba(0,0,0,.12)]">
            <MapPanel />
          </section>
          <div className="mt-10 grid grid-cols-12 items-start gap-x-[60px]">
            <Card title="Current Weather" icon={<MdCloudQueue />} span="col-span-3">
              <div className="px-[62px] pt-3.5">
                <h3 className="mb-8 font-['Noto_Sans',sans-serif] text-[48px] leading-[62px] text-[#494d64]">Monterey</h3>
                <WeatherTable
                  label="Current weather"
                  cols={["w-[212px]", ""]}
                  icon={<BrokenClouds />}
                  summary="Clouds - broken clouds"
                  rows={currentRows}
                />
              </div>
            </Card>

            <Card title="3-Hour Forecast" icon={<MdAccessTime />} span="col-span-4">
              <div className="h-[912px] overflow-hidden px-[62px] pt-3.5">
                <DateHeading className="text-[#494d64]">Jul 3, 2020, 11:00:00 AM</DateHeading>
                <WeatherTable
                  label="Jul 3, 2020, 11:00:00 AM"
                  cols={["w-[312px]", ""]}
                  icon={<BrokenClouds />}
                  summary="Clouds - broken clouds"
                  rows={hourlyRows}
                />
                <DateHeading className="mt-[34px] text-[#494d64]">Jul 3, 2020, 2:00:00 PM</DateHeading>
                <WeatherTable label="Jul 3, 2020, 2:00:00 PM" cols={["w-[312px]", ""]} icon={"\u00a0"} rows={[]} />
              </div>
            </Card>

            <Card title="5-Day Forecast" icon={<MdDateRange />} span="col-span-5">
              <div className="h-[912px] overflow-hidden px-[62px] pt-3.5">
                <DateHeading className="text-[#212529]">Jul 3, 2020</DateHeading>
                <WeatherTable
                  label="Jul 3, 2020"
                  cols={["w-[226px]", "", "w-[248px]", "w-[134px]"]}
                  icon={<ScatteredClouds />}
                  summary="Clouds - scattered clouds"
                  rows={day1Rows}
                />
                <DateHeading className="mt-[34px] text-[#212529]">Jul 4, 2020</DateHeading>
                <WeatherTable
                  label="Jul 4, 2020"
                  cols={["w-[252px]", "", "w-[276px]", "w-[150px]"]}
                  icon={<ClearSun />}
                  summary="Clear - sky is clear"
                  rows={day2Rows}
                />
              </div>
            </Card>
          </div>
        </main>
      </div>
    </div>
  );
}
